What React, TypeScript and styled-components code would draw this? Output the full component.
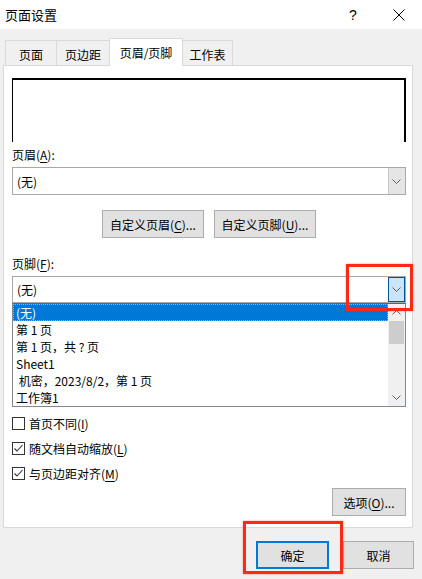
import styled, { createGlobalStyle } from "styled-components";

const GlobalStyle = createGlobalStyle`
  html, body {
    margin: 0;
    padding: 0;
    background: #f0f0f0;
  }
  body {
    font-family: "Noto Sans CJK SC", "Microsoft YaHei", sans-serif;
    font-size: 12px;
    color: #000;
  }
`;

const Dialog = styled.div`
  position: relative;
  width: 422px;
  height: 579px;
  background: #f0f0f0;
  display: flex;
  flex-direction: column;
  overflow: hidden;
`;

const TitleBar = styled.div`
  height: 29px;
  background: #fff;
  display: flex;
  align-items: center;
  padding-left: 5px;
`;

const Title = styled.div`
  flex: 1;
  font-size: 13px;
  line-height: 29px;
`;

const TitleButton = styled.div`
  width: 46px;
  height: 29px;
  display: flex;
  align-items: center;
  justify-content: center;
  font-size: 14px;
  font-family: "Liberation Sans", sans-serif;
`;

const Body = styled.div`
  padding: 9px 9px 0 3px;
  display: flex;
  flex-direction: column;
`;

const TabRow = styled.div`
  display: flex;
  align-items: flex-end;
  height: 27px;
  padding-left: 2px;
  position: relative;
  z-index: 1;
`;

const Tab = styled.div<{ $active?: boolean; $w: number }>`
  width: ${(p) => p.$w}px;
  height: ${(p) => (p.$active ? 28 : 25)}px;
  margin-bottom: ${(p) => (p.$active ? -1 : 0)}px;
  box-sizing: border-box;
  border: 1px solid #d9d9d9;
  border-bottom: none;
  margin-right: -1px;
  background: ${(p) => (p.$active ? "#fff" : "#f0f0f0")};
  display: flex;
  align-items: center;
  justify-content: center;
  padding-top: ${(p) => (p.$active ? 0 : 3)}px;
  font-size: 12px;
`;

const Panel = styled.div`
  width: 410px;
  height: 463px;
  box-sizing: border-box;
  border: 1px solid #d9d9d9;
  background: #fff;
  padding: 12px 6px 0 8px;
  display: flex;
  flex-direction: column;
`;

const Preview = styled.div`
  height: 64px;
  box-sizing: border-box;
  border-top: 2px solid #000;
  border-left: 1px solid #000;
  border-right: 2px solid #000;
`;

const Label = styled.div<{ $top: number }>`
  margin-top: ${(p) => p.$top}px;
  height: 18px;
  line-height: 18px;
`;

const Key = styled.span`
  text-decoration: underline;
  text-underline-offset: 2px;
`;

const Combo = styled.div<{ $h: number }>`
  margin-top: 3px;
  height: ${(p) => p.$h}px;
  box-sizing: border-box;
  border: 1px solid #a8a8a8;
  display: flex;
  background: #fff;
`;

const ComboText = styled.div`
  flex: 1;
  padding-left: 4px;
  display: flex;
  align-items: center;
`;

const ComboArrow = styled.div<{ $hot?: boolean }>`
  width: 17px;
  box-sizing: border-box;
  background: ${(p) => (p.$hot ? "#cce4f7" : "#e5e5e5")};
  border: 1px solid ${(p) => (p.$hot ? "#005499" : "#e5e5e5")};
  border-left: 1px solid ${(p) => (p.$hot ? "#005499" : "#c5c5c5")};
  display: flex;
  align-items: center;
  justify-content: center;
`;

const ButtonRow = styled.div`
  margin-top: 15px;
  display: flex;
  justify-content: center;
  gap: 10px;
`;

const Button = styled.div<{ $w: number; $default?: boolean }>`
  width: ${(p) => p.$w}px;
  height: 28px;
  box-sizing: border-box;
  background: #e1e1e1;
  border: ${(p) => (p.$default ? "2px solid #0078d7" : "1px solid #adadad")};
  display: flex;
  align-items: center;
  justify-content: center;
`;

const List = styled.div`
  height: 104px;
  box-sizing: border-box;
  border: 1px solid #828790;
  border-top: 1px solid #646464;
  display: flex;
  background: #fff;
`;

const Items = styled.div`
  flex: 1;
  display: flex;
  flex-direction: column;
`;

const Item = styled.div<{ $selected?: boolean }>`
  height: 17px;
  line-height: 17px;
  padding-left: 3px;
  box-sizing: border-box;
  white-space: pre;
  background: ${(p) => (p.$selected ? "#0078d7" : "transparent")};
  color: ${(p) => (p.$selected ? "#fff" : "#000")};
  outline: ${(p) => (p.$selected ? "1px dotted #f7a23a" : "none")};
  outline-offset: -1px;
`;

const ScrollBar = styled.div`
  width: 17px;
  background: #f0f0f0;
  display: flex;
  flex-direction: column;
`;

const ScrollArrow = styled.div`
  height: 17px;
  display: flex;
  align-items: center;
  justify-content: center;
`;

const ScrollThumb = styled.div`
  height: 23px;
  margin: 0 1px;
  background: #cdcdcd;
`;

const ScrollTrack = styled.div`
  flex: 1;
`;

const CheckRow = styled.div<{ $first?: boolean }>`
  margin-top: ${(p) => (p.$first ? 4 : 0)}px;
  height: 25px;
  display: flex;
  align-items: center;
  gap: 4px;
`;

const Box = styled.div`
  width: 13px;
  height: 13px;
  box-sizing: border-box;
  border: 1px solid #333;
  background: #fff;
  display: flex;
  align-items: center;
  justify-content: center;
`;

const OptionsRow = styled.div`
  margin-top: 2px;
  display: flex;
  justify-content: flex-end;
`;

const Footer = styled.div`
  margin-top: 13px;
  display: flex;
  justify-content: flex-end;
  gap: 14px;
  padding-right: 8px;
`;

const Marker = styled.div<{ $x: number; $y: number; $w: number; $h: number }>`
  position: absolute;
  left: ${(p) => p.$x}px;
  top: ${(p) => p.$y}px;
  width: ${(p) => p.$w}px;
  height: ${(p) => p.$h}px;
  box-sizing: border-box;
  border: 3px solid #fb2a14;
  box-shadow: 0 0 2px rgba(251, 42, 20, 0.5);
`;

const Chevron = ({ up = false }: { up?: boolean }) => (
  <svg width="9" height="5" viewBox="0 0 9 5">
    <path
      d={up ? "M0.5 4.5 L4.5 0.5 L8.5 4.5" : "M0.5 0.5 L4.5 4.5 L8.5 0.5"}
      fill="none"
      stroke="#606060"
      strokeWidth="1"
    />
  </svg>
);

const Check = () => (
  <svg width="11" height="11" viewBox="0 0 11 11">
    <path d="M1.5 5.5 L4 8 L9.5 2" fill="none" stroke="#333" strokeWidth="1.1" />
  </svg>
);

const items = ["(无)", "第 1 页", "第 1 页，共 ? 页", "Sheet1", " 机密，2023/8/2，第 1 页", "工作簿1"];

export default function App() {
  return (
    <Dialog>
      <GlobalStyle />
      <TitleBar>
        <Title>页面设置</Title>
        <TitleButton>?</TitleButton>
        <TitleButton>
          <svg width="12" height="12" viewBox="0 0 12 12">
            <path d="M0.5 0.5 L11.5 11.5 M11.5 0.5 L0.5 11.5" stroke="#000" strokeWidth="1" />
          </svg>
        </TitleButton>
      </TitleBar>
      <Body>
        <TabRow>
          <Tab $w={52}>页面</Tab>
          <Tab $w={54}>页边距</Tab>
          <Tab $w={74} $active>页眉/页脚</Tab>
          <Tab $w={51}>工作表</Tab>
        </TabRow>
        <Panel>
          <Preview />
          <Label $top={4}>
            页眉(<Key>A</Key>):
          </Label>
          <Combo $h={28}>
            <ComboText>(无)</ComboText>
            <ComboArrow>
              <Chevron />
            </ComboArrow>
          </Combo>
          <ButtonRow>
            <Button $w={102}>
              自定义页眉(<Key>C</Key>)...
            </Button>
            <Button $w={102}>
              自定义页脚(<Key>U</Key>)...
            </Button>
          </ButtonRow>
          <Label $top={17}>
            页脚(<Key>F</Key>):
          </Label>
          <Combo $h={27}>
            <ComboText>(无)</ComboText>
            <ComboArrow $hot>
              <Chevron />
            </ComboArrow>
          </Combo>
          <List>
            <Items>
              {items.map((t, i) => (
                <Item key={i} $selected={i === 0}>
                  {t}
                </Item>
              ))}
            </Items>
            <ScrollBar>
              <ScrollArrow>
                <Chevron up />
              </ScrollArrow>
              <ScrollThumb />
              <ScrollTrack />
              <ScrollArrow>
                <Chevron />
              </ScrollArrow>
            </ScrollBar>
          </List>
          <CheckRow $first>
            <Box />
            <span>
              首页不同(<Key>I</Key>)
            </span>
          </CheckRow>
          <CheckRow>
            <Box>
              <Check />
            </Box>
            <span>
              随文档自动缩放(<Key>L</Key>)
            </span>
          </CheckRow>
          <CheckRow>
            <Box>
              <Check />
            </Box>
            <span>
              与页边距对齐(<Key>M</Key>)
            </span>
          </CheckRow>
          <OptionsRow>
            <Button $w={74}>
              选项(<Key>O</Key>)...
            </Button>
          </OptionsRow>
        </Panel>
      </Body>
      <Footer>
        <Button $w={73} $default>
          确定
        </Button>
        <Button $w={71}>取消</Button>
      </Footer>
      <Marker $x={346} $y={264} $w={67} $h={47} />
      <Marker $x={243} $y={521} $w={100} $h={53} />
    </Dialog>
  );
}
